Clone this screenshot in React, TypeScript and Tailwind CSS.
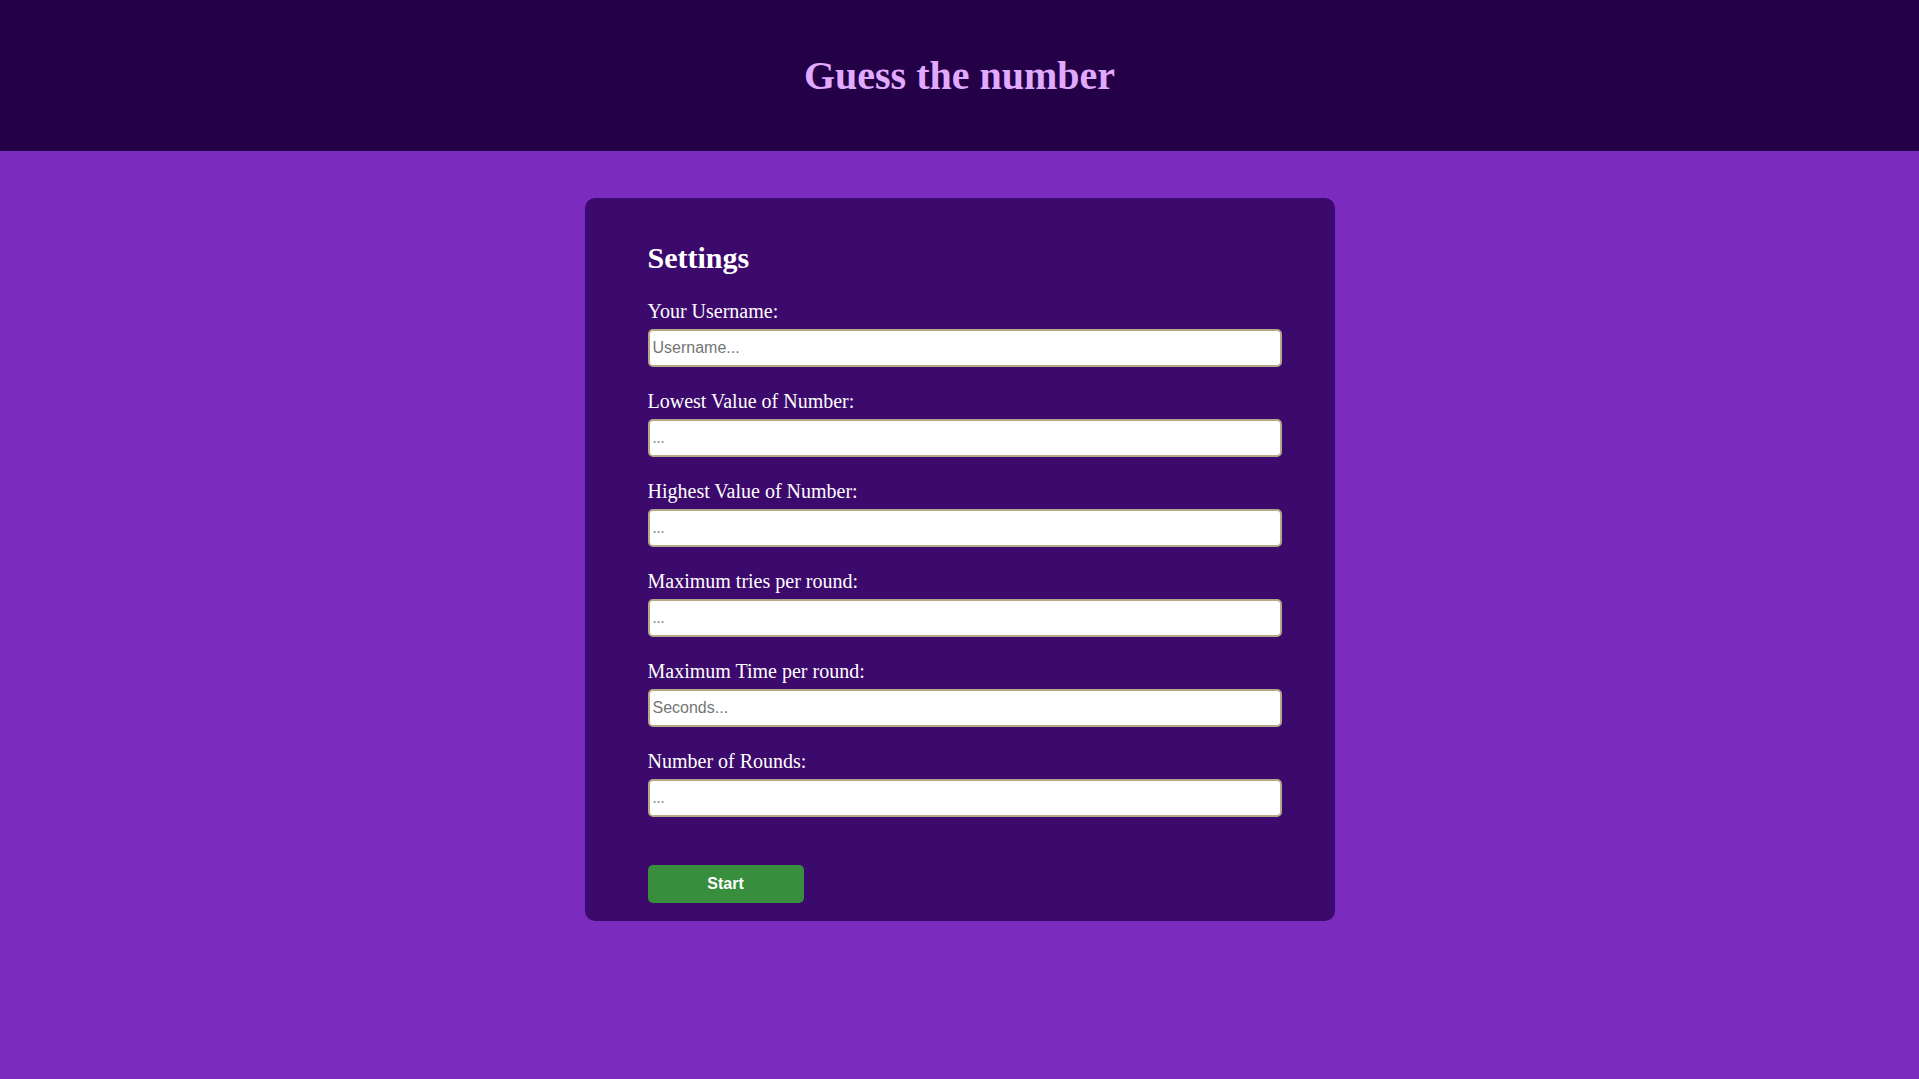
import React from "react";

const fields = [
  { label: "Your Username:", placeholder: "Username...", sans: true },
  { label: "Lowest Value of Number:", placeholder: "...", sans: false },
  { label: "Highest Value of Number:", placeholder: "...", sans: false },
  { label: "Maximum tries per round:", placeholder: "...", sans: false },
  { label: "Maximum Time per round:", placeholder: "Seconds...", sans: true },
  { label: "Number of Rounds:", placeholder: "...", sans: false },
];

function SettingsField({
  label,
  placeholder,
  sans,
}: {
  label: string;
  placeholder: string;
  sans: boolean;
}) {
  return (
    <div className="flex flex-col">
      <label className="text-[20px] leading-[24px] text-white mb-[6px]">
        {label}
      </label>
      <input
        type="text"
        placeholder={placeholder}
        className={
          sans
            ? "h-[38px] w-full rounded-[5px] border-2 border-[#b3a988] bg-white pl-[3px] font-['Liberation_Sans',Arial,sans-serif] text-[16px] text-black outline-none placeholder:text-[#757575]"
            : "h-[38px] w-full rounded-[5px] border-2 border-[#b3a988] bg-white pl-[3px] font-['Liberation_Serif',serif] text-[16px] text-black outline-none placeholder:text-[#8a8a8a]"
        }
      />
    </div>
  );
}

export default function App() {
  return (
    <div className="min-h-screen bg-[#7b2cbf] font-['Liberation_Serif','Times_New_Roman',serif]">
      <header className="flex h-[151px] items-center justify-center bg-[#240046]">
        <h1 className="text-[40px] font-bold leading-[44px] text-[#e0aaff]">
          Guess the number
        </h1>
      </header>

      <main className="flex justify-center pt-[47px]">
        <div className="w-[750px] rounded-[10px] bg-[#3c096c] pt-[42px] pl-[63px] pr-[53px] pb-[18px]">
          <h2 className="mb-[23px] text-[30px] font-bold leading-[36px] text-white">
            Settings
          </h2>

          <div className="flex flex-col gap-[22px]">
            {fields.map((f) => (
              <SettingsField key={f.label} {...f} />
            ))}
          </div>

          <button className="mt-[48px] h-[38px] w-[156px] rounded-[5px] bg-[#388e3c] font-['Liberation_Sans',Arial,sans-serif] text-[16px] font-bold text-white">
            Start
          </button>
        </div>
      </main>
    </div>
  );
}
